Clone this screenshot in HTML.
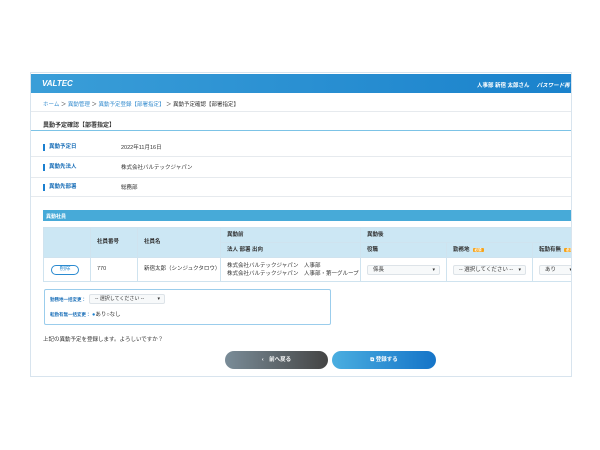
<!DOCTYPE html>
<html><head><meta charset="utf-8"><style>
*{margin:0;padding:0;box-sizing:border-box}
body{width:600px;height:450px;background:#fff;font-family:"Liberation Sans","Noto Sans CJK JP",sans-serif;font-size:5.5px;color:#333;position:relative;overflow:hidden}
.a{position:absolute}
.frame{left:30px;top:72px;width:542px;height:305px;border:1px solid #d8e4ee;background:#fff}
.hdr{left:31px;top:74px;width:540px;height:19px;background:linear-gradient(90deg,#3a9ed8,#1a82cc);color:#fff;font-weight:bold}
.line{height:1px;background:#e6eaee}
.lab{color:#1a6fb8;font-weight:bold;border-left:2px solid #1a7fd0;padding-left:4px;line-height:7px}
table{line-height:7px}
th,td{border:1px solid #cfe3ef;font-weight:normal;text-align:left;padding:0 0 0 6px;vertical-align:middle;overflow:hidden;white-space:nowrap}
th{background:#cce7f4;font-weight:bold}
.sel{border:1px solid #dde3e8;background:#f7f9fa;height:10px;border-radius:2px;line-height:9px;padding-left:5px;position:relative}
.sel:after{content:"▾";position:absolute;right:4px;font-size:5px}
.tag{background:#f5a31a;color:#fff;font-size:3.5px;padding:0 2px;border-radius:1px;margin-left:3px}
</style></head><body>
<div class="a frame"></div>
<div class="a hdr"><span class="a" style="left:11px;top:5px;font-style:italic;font-size:8px">VALTEC</span><span class="a" style="left:446px;top:7px;font-size:5.5px;white-space:nowrap">人事部 新宿 太郎さん　 <i>パスワード再</i></span></div>
<div class="a" style="left:43px;top:100px;white-space:nowrap"><span style="color:#3a8fd0">ホーム</span> ＞ <span style="color:#3a8fd0">異動管理</span> ＞ <span style="color:#3a8fd0">異動予定登録【部署指定】</span> ＞ 異動予定確認【部署指定】</div>
<div class="a line" style="left:31px;top:111px;width:540px"></div>
<div class="a" style="left:43px;top:120px;font-weight:bold;font-size:6px">異動予定確認【部署指定】</div>
<div class="a" style="left:31px;top:130px;width:540px;height:1px;background:#7cc3e6"></div>
<div class="a lab" style="left:43px;top:144px">異動予定日</div><div class="a" style="left:121px;top:143px">2022年11月16日</div>
<div class="a line" style="left:31px;top:156px;width:540px"></div>
<div class="a lab" style="left:43px;top:164px">異動先法人</div><div class="a" style="left:121px;top:163px">株式会社バルテックジャパン</div>
<div class="a line" style="left:31px;top:177px;width:540px"></div>
<div class="a lab" style="left:43px;top:184px">異動先部署</div><div class="a" style="left:121px;top:183px">総務部</div>
<div class="a line" style="left:31px;top:196px;width:540px"></div>
<div class="a" style="left:43px;top:210px;width:528px;height:11px;background:#47aad8;color:#fff;font-weight:bold;padding:3px 0 0 3px;font-size:5px">異動社員</div>
<div class="a" style="left:43px;top:227px;width:528px;height:56px;overflow:hidden">
<table style="width:540px;border-collapse:collapse;table-layout:fixed">
<colgroup><col style="width:47px"><col style="width:47px"><col style="width:83px"><col style="width:140px"><col style="width:86px"><col style="width:86px"><col style="width:51px"></colgroup>
<tr style="height:15px"><th rowspan="2"></th><th rowspan="2">社員番号</th><th rowspan="2">社員名</th><th style="height:15px">異動前</th><th colspan="3">異動後</th></tr>
<tr style="height:15px"><th style="height:15px">法人 部署 出向</th><th>役職</th><th>勤務地<span class="tag">必須</span></th><th>転勤有無<span class="tag">必須</span></th></tr>
<tr style="height:24px"><td style="padding:0 0 0 7px"><div style="width:28px;height:10px;border:1.5px solid #2a8ad0;border-radius:6px;text-align:center;line-height:7px;color:#2a8ad0">削除</div></td><td>770</td><td>新宿太郎（シンジュクタロウ）</td><td style="line-height:8px">株式会社バルテックジャパン　人事部<br>株式会社バルテックジャパン　人事部・第一グループ</td><td style="padding:0 6px"><div class="sel">係長</div></td><td style="padding:0 6px"><div class="sel">-- 選択してください --</div></td><td style="padding:0 6px"><div class="sel">あり</div></td></tr>
</table></div>
<div class="a" style="left:44px;top:289px;width:287px;height:36px;border:1px solid #9bcdec;border-radius:2px"></div>
<div class="a" style="left:50px;top:297px;color:#1a6fb8;font-weight:bold;font-size:4.5px">勤務地一括変更：</div>
<div class="a sel" style="left:89px;top:294px;width:76px;font-size:5px">-- 選択してください --</div>
<div class="a" style="left:50px;top:310px;white-space:nowrap"><span style="color:#1a6fb8;font-weight:bold;font-size:4.5px">転勤有無一括変更：</span> <span style="color:#1a7fd0">●</span>あり○なし</div>
<div class="a" style="left:43px;top:335px">上記の異動予定を登録します。よろしいですか？</div>
<div class="a" style="left:225px;top:351px;width:103px;height:18px;border-radius:9px;background:linear-gradient(90deg,#7a8c98,#444);color:#fff;font-weight:bold;text-align:center;line-height:18px">‹　前へ戻る</div>
<div class="a" style="left:332px;top:351px;width:104px;height:18px;border-radius:9px;background:linear-gradient(90deg,#4aaee0,#1574c8);color:#fff;font-weight:bold;text-align:center;line-height:18px">⧉ 登録する</div>
</body></html>
